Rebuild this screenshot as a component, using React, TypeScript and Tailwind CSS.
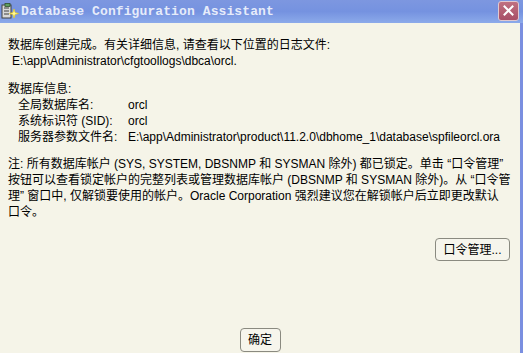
import React from 'react';

const font = "font-['Liberation_Sans','Noto_Sans_CJK_SC',sans-serif]";

const AppIcon: React.FC = () => (
  <svg width="18" height="17" viewBox="0 0 18 17" className="shrink-0">
    <rect x="1" y="2" width="9" height="13" fill="#d8d8d8" stroke="#404040" strokeWidth="1" />
    <line x1="3" y1="5" x2="8" y2="5" stroke="#404040" />
    <line x1="3" y1="8" x2="8" y2="8" stroke="#404040" />
    <line x1="3" y1="11" x2="8" y2="11" stroke="#404040" />
    <rect x="4" y="0.5" width="5" height="3" fill="#60a060" stroke="#305030" strokeWidth="0.8" />
    <path d="M13 6 L14 9.5 L17.5 10.5 L14 11.5 L13 15 L12 11.5 L8.5 10.5 L12 9.5 Z" fill="#fff8a0" stroke="#f0d000" strokeWidth="0.6" />
  </svg>
);

const App: React.FC = () => {
  return (
    <div className={`w-[523px] h-[353px] flex flex-col overflow-hidden bg-[#f5f4e8] ${font}`}>
      {/* title bar */}
      <div className="h-[23px] flex items-center bg-gradient-to-b from-[#7d97e0] via-[#7592e0] to-[#8caaea] pl-[1px] pr-[4px]">
        <AppIcon />
        <span className="ml-[2px] font-['Liberation_Mono',monospace] font-bold text-[13px] text-[#e6ecfa] tracking-[0.1px]">
          Database Configuration Assistant
        </span>
        <div className="ml-auto w-[21px] h-[20px] mt-[-2px] rounded-[3px] border border-[#e0c8d0] bg-gradient-to-b from-[#c07080] to-[#a85068] flex items-center justify-center">
          <svg width="11" height="11" viewBox="0 0 11 11">
            <path d="M1.5 1.5 L9.5 9.5 M9.5 1.5 L1.5 9.5" stroke="#ffffff" strokeWidth="2" strokeLinecap="square" />
          </svg>
        </div>
      </div>

      {/* body */}
      <div className="flex-1 flex flex-col border-r-[3px] border-[#7a8fe0] text-[12px] leading-[16px] text-black pt-[14px]">
        <div className="pl-[8px]">
          <p>数据库创建完成。有关详细信息, 请查看以下位置的日志文件:</p>
          <p className="pl-[4px]">E:\app\Administrator\cfgtoollogs\dbca\orcl.</p>
        </div>

        <div className="pl-[8px] mt-[12px]">
          <p>数据库信息:</p>
          <div className="pl-[10px]">
            <div className="flex"><span className="w-[110px]">全局数据库名:</span><span>orcl</span></div>
            <div className="flex"><span className="w-[110px]">系统标识符 (SID):</span><span>orcl</span></div>
            <div className="flex"><span className="w-[110px]">服务器参数文件名:</span><span>E:\app\Administrator\product\11.2.0\dbhome_1\database\spfileorcl.ora</span></div>
          </div>
        </div>

        <div className="pl-[8px] mt-[11px] whitespace-nowrap">
          <p>注: 所有数据库帐户 (SYS, SYSTEM, DBSNMP 和 SYSMAN 除外) 都已锁定。单击 “口令管理”</p>
          <p>按钮可以查看锁定帐户的完整列表或管理数据库帐户 (DBSNMP 和 SYSMAN 除外)。从 “口令管</p>
          <p>理” 窗口中, 仅解锁要使用的帐户。Oracle Corporation 强烈建议您在解锁帐户后立即更改默认</p>
          <p>口令。</p>
        </div>

        <div className="flex justify-end pr-[10px] mt-[18px]">
          <button className="w-[75px] h-[23px] rounded-[4px] border border-[#8a8a80] bg-[#f6f5ec] text-[12px]">
            口令管理...
          </button>
        </div>

        <div className="flex justify-center mt-auto mb-[1px]">
          <button className="w-[41px] h-[24px] rounded-[4px] border border-[#8a8a80] bg-[#f6f5ec] text-[12px]">
            确定
          </button>
        </div>
      </div>
    </div>
  );
};

export default App;
